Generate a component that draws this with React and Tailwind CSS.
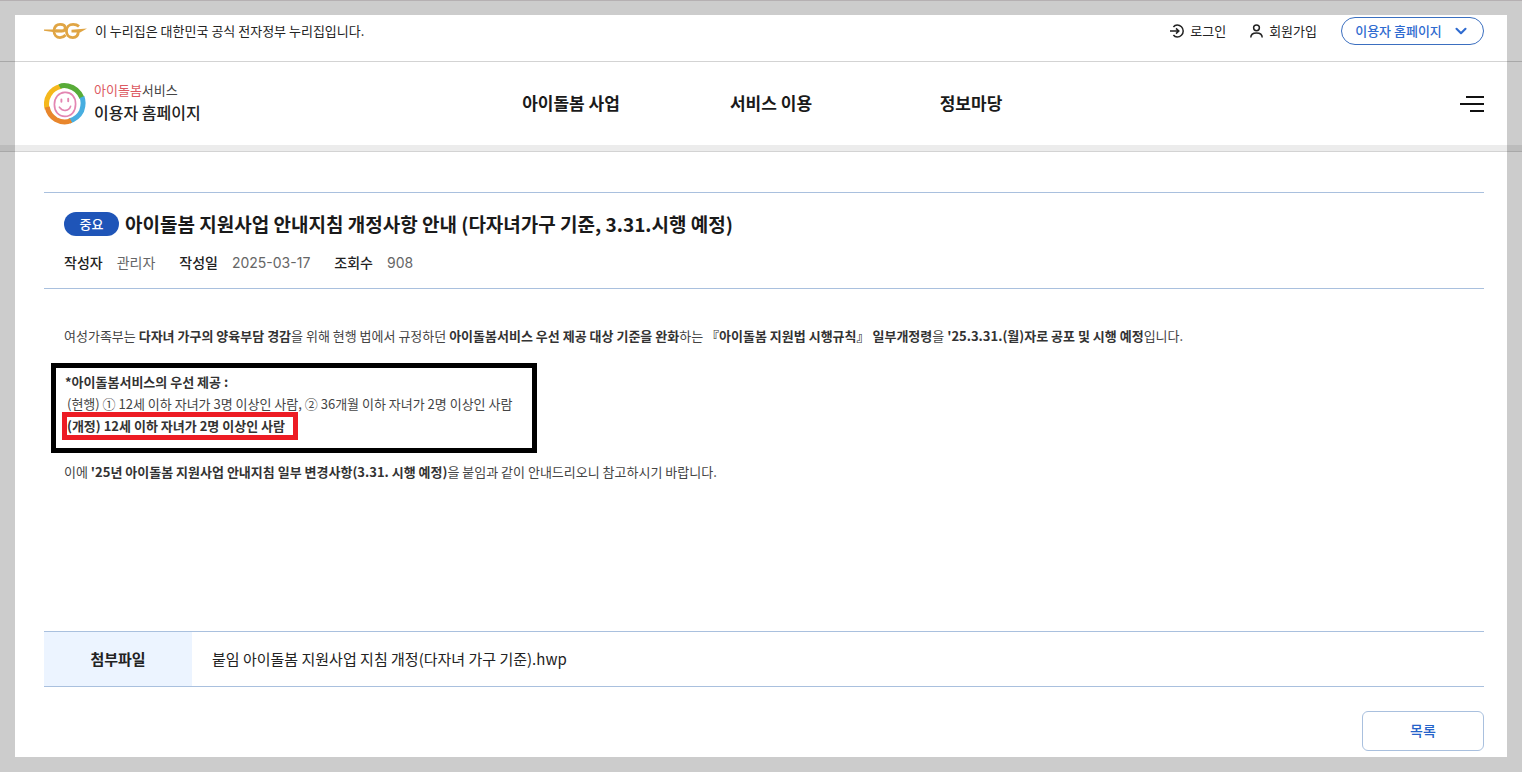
import { ChevronDown } from 'lucide-react';

const MENU = ['아이돌봄 사업', '서비스 이용', '정보마당'];

const META = [
  { label: '작성자', value: '관리자' },
  { label: '작성일', value: '2025-03-17' },
  { label: '조회수', value: '908' },
];

function GovMark() {
  return (
    <svg width="43" height="18" viewBox="0 0 43 18" fill="none" stroke="#e0a544" strokeWidth="2.8" aria-hidden="true">
      <path d="M0 7.4 L12 7.4 L22 8 L20 10.2 L9 10 L0 8.8 Z" fill="#e0a544" stroke="none" />
      <path d="M10 8.4 C10.5 4 13 2.4 16.2 2.4 C19.5 2.4 21.2 4 21.2 6 C21.2 8 19.8 9 17.5 9 L12 9" />
      <path d="M10 9 C10 13 12.6 15.6 16 15.6 C18.6 15.6 20.2 14.6 21.6 13" />
      <path d="M35 4.4 C33.4 3 31.4 2.4 29.2 2.4 C25 2.4 22.4 5 22.4 9 C22.4 13 25 15.6 28.8 15.6 C32.2 15.6 34.2 13.4 34.4 9.4" />
      <path d="M27.5 7.8 L43 6.6 L36 10.4 L27.5 10.4 Z" fill="#e0a544" stroke="none" />
    </svg>
  );
}

function Logo() {
  return (
    <svg width="42" height="42" viewBox="0 0 42 42" fill="none" aria-hidden="true">
      <g strokeWidth="5">
        <path d="M3.2 26 A18 18 0 0 1 17 3.4" stroke="#f5b81c" />
        <path d="M15.6 3.6 Q19 1.8 24 3 Q34 5.4 38 15" stroke="#58ab38" />
        <path d="M38 14 Q40.4 20 37.6 28 Q34 35.4 25.4 38" stroke="#47aee0" />
        <path d="M27 37.6 Q20 41 12 36.6 Q4.6 32 3.2 24" stroke="#e8862c" />
      </g>
      <path
        d="M20.6 9.4 C27.4 8.8 31.6 14 31.6 21 C31.6 28.4 27.4 33.4 21 33.4 C14.4 33.4 10.4 28.4 10.4 21.6 C10.4 14.6 14.6 9.8 20.6 9.4 Z"
        stroke="#e386b2"
        strokeWidth="1.7"
      />
      <path d="M17.4 16.4 V18.8 M24.2 15.8 V18.2" stroke="#e386b2" strokeWidth="1.9" strokeLinecap="round" />
      <path d="M15.4 24.2 Q18.2 27.8 21.6 27.4 Q25.4 27 26.6 23.2" stroke="#e386b2" strokeWidth="1.6" strokeLinecap="round" />
    </svg>
  );
}

function LoginIcon() {
  return (
    <svg width="14" height="14" viewBox="0 0 14 14" fill="none" stroke="#222" strokeWidth="1.5" aria-hidden="true">
      <path d="M3.4 3 C4.4 1.6 5.7 1 7.2 1 C10.5 1 13.2 3.6 13.2 7 C13.2 10.4 10.5 13 7.2 13 C5.7 13 4.4 12.4 3.4 11" />
      <path d="M0 7 H8.6 M6 4.4 L8.8 7 L6 9.6" />
    </svg>
  );
}

function UserIcon() {
  return (
    <svg width="13" height="14" viewBox="0 0 13 14" fill="none" stroke="#222" strokeWidth="1.5" aria-hidden="true">
      <circle cx="6.5" cy="3.8" r="2.9" />
      <path d="M0.8 13.6 C0.8 10.6 2.8 9 6.5 9 C10.2 9 12.2 10.6 12.2 13.6" />
    </svg>
  );
}

function TopBar() {
  return (
    <div className="h-[62px] border-b border-[#d3d3d3] pl-11 pr-[38px] flex items-start justify-between pt-[17px] text-[13px] text-[#222]">
      <div className="flex items-center gap-2 h-7">
        <GovMark />
        <span>이 누리집은 대한민국 공식 전자정부 누리집입니다.</span>
      </div>
      <div className="flex items-center gap-6 h-7">
        <a href="#" className="flex items-center gap-1.5">
          <LoginIcon />
          로그인
        </a>
        <a href="#" className="flex items-center gap-1.5">
          <UserIcon />
          회원가입
        </a>
        <button className="h-7 w-[143px] rounded-full border border-[#3b6fc0] text-[#2f6bd0] flex items-center justify-center gap-2.5 font-medium">
          이용자 홈페이지
          <ChevronDown size={18} strokeWidth={2.8} />
        </button>
      </div>
    </div>
  );
}

function Header() {
  return (
    <header>
      <TopBar />
      <div className="h-[83px] pl-11 pr-[38px] grid grid-cols-[1fr_auto_1fr] items-center">
        <a href="#" className="flex items-center gap-2 text-[#222]">
          <Logo />
          <span className="flex flex-col pb-1">
            <span className="text-[13px] leading-5 text-[#444]">
              <span className="text-[#dc5a62]">아이돌봄</span>서비스
            </span>
            <span className="text-base leading-6 font-medium">이용자 홈페이지</span>
          </span>
        </a>
        <nav className="pl-3.5 pb-0.5 grid grid-cols-[200px_200px_200px] text-center text-[17px] font-bold text-[#1a1a1a]">
          {MENU.map((item) => (
            <a key={item} href="#">{item}</a>
          ))}
        </nav>
        <button aria-label="전체메뉴" className="justify-self-end flex flex-col items-end gap-[5px]">
          <span className="h-0.5 w-[18px] bg-[#111]" />
          <span className="h-0.5 w-6 bg-[#111]" />
          <span className="h-0.5 w-3.5 bg-[#111]" />
        </button>
      </div>
      <div className="h-[7px] bg-[#ececec] border-b border-[#d3d3d3]" />
    </header>
  );
}

export default function App() {
  return (
    <div className="relative min-h-screen bg-white border-t border-[#e3dcdf] font-['Noto_Sans_CJK_KR',sans-serif]">
      <div className="-mt-px">
        <Header />
      </div>

      <main className="pl-11 pr-[38px] pt-10 pb-5">
        <section className="border-y border-[#a9c0de] h-[97px] px-5 pt-[15px]">
          <h1 className="flex items-center gap-1.5 text-[19px] leading-8 font-bold text-[#1a1a1a]">
            <span className="w-[55px] h-6 rounded-full bg-[#1f55b8] text-white text-[13px] leading-6 text-center font-medium">
              중요
            </span>
            아이돌봄 지원사업 안내지침 개정사항 안내 (다자녀가구 기준, 3.31.시행 예정)
          </h1>
          <dl className="flex gap-6 mt-3 text-sm leading-5">
            {META.map(({ label, value }) => (
              <div key={label} className="flex items-baseline gap-3.5">
                <dt className="text-[#222] font-medium">{label}</dt>
                <dd className="text-[#666] font-['Inter','Noto_Sans_CJK_KR',sans-serif]">{value}</dd>
              </div>
            ))}
          </dl>
        </section>

        <article className="px-[7px] pt-9 h-[342px] text-[13px] leading-[22px] text-[#444] [&_strong]:text-[#333]">
          <p className="px-[13px]">
            여성가족부는 <strong>다자녀 가구의 양육부담 경감</strong>을 위해 현행 법에서 규정하던{' '}
            <strong>아이돌봄서비스 우선 제공 대상 기준을 완화</strong>하는{' '}
            <strong>『아이돌봄 지원법 시행규칙』 일부개정령</strong>을{' '}
            <strong>'25.3.31.(월)자로 공포 및 시행 예정</strong>입니다.
          </p>
          <div className="mt-4 w-[486px] h-[90px] border-5 border-black px-[9px] pt-[3px]">
            <p><strong>*아이돌봄서비스의 우선 제공 :</strong></p>
            <p className="px-0.5 whitespace-nowrap">(현행) ① 12세 이하 자녀가 3명 이상인 사람, ② 36개월 이하 자녀가 2명 이상인 사람</p>
            <p className="px-0.5 w-[230px] whitespace-nowrap outline-5 -outline-offset-2 outline-[#ed1c24]">
              <strong>(개정) 12세 이하 자녀가 2명 이상인 사람</strong>
            </p>
          </div>
          <p className="px-[13px] mt-2">
            이에 <strong>'25년 아이돌봄 지원사업 안내지침 일부 변경사항(3.31. 시행 예정)</strong>을 붙임과 같이
            안내드리오니 참고하시기 바랍니다.
          </p>
        </article>

        <table className="w-full border-y border-[#a9c0de] text-[15px] text-[#222]">
          <tbody>
            <tr className="h-[55px]">
              <th className="w-[148px] bg-[#ecf4ff] font-bold">첨부파일</th>
              <td className="px-5">
                <a href="#">붙임 아이돌봄 지원사업 지침 개정(다자녀 가구 기준).hwp</a>
              </td>
            </tr>
          </tbody>
        </table>

        <div className="flex justify-end mt-6">
          <button className="w-[122px] h-10 pb-0.5 rounded-md border border-[#a9c0de] text-sm font-medium text-[#2563c9]">
            목록
          </button>
        </div>
      </main>

      <div className="absolute inset-0 -top-px border-[15px] border-black/20 pointer-events-none" />
    </div>
  );
}
